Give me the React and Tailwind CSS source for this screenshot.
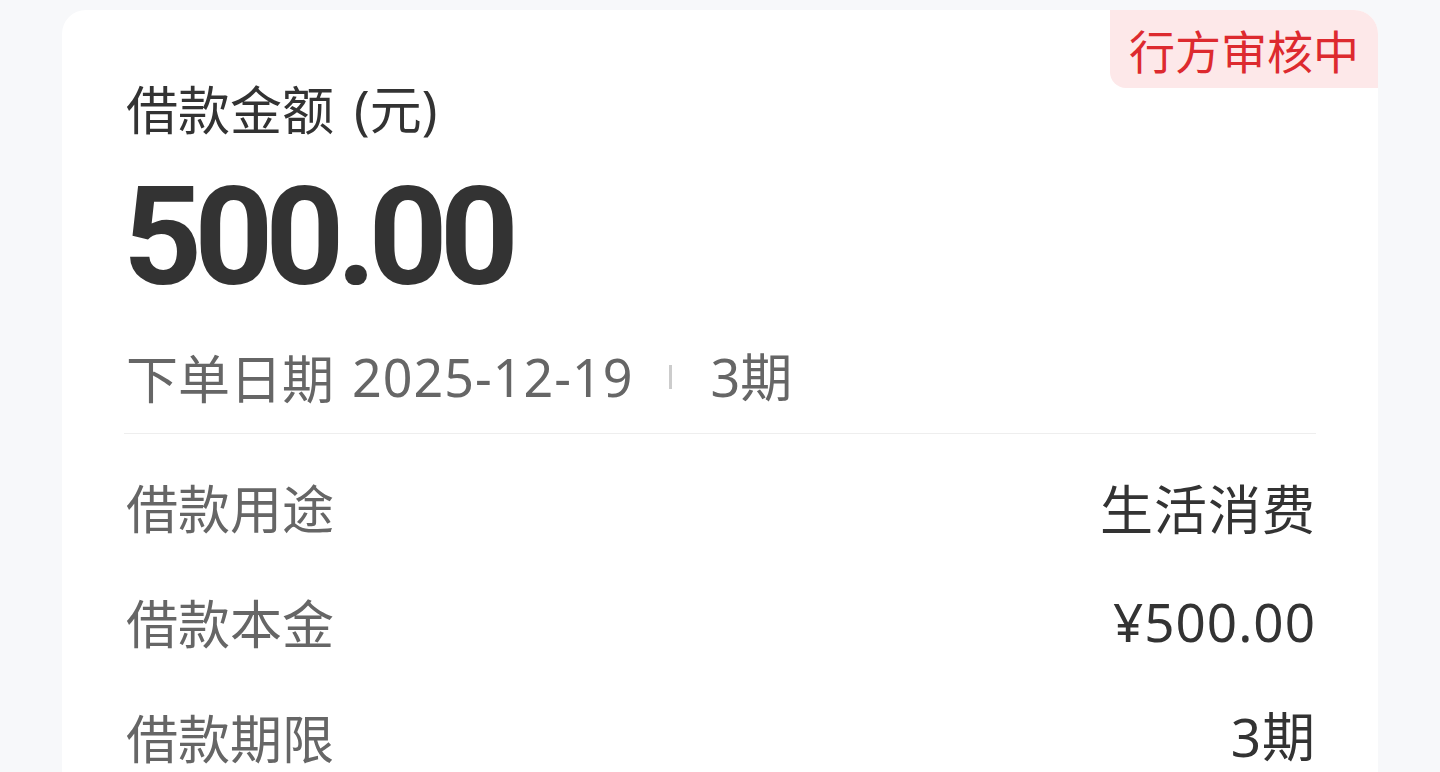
import React from "react";

function Row({ label, value, valueCjk }) {
  return (
    <div className="flex items-center justify-between h-[60px]">
      <span className="text-[52px] leading-[60px] text-[#666666] font-['Noto_Sans_CJK_SC','Noto_Sans',sans-serif]">
        {label}
      </span>
      <span
        className={
          valueCjk
            ? "text-[53px] leading-[60px] text-[#333333] tracking-[1px] font-['Noto_Sans_CJK_SC','Noto_Sans',sans-serif]"
            : "text-[53px] leading-[60px] text-[#333333] tracking-[1px] font-['Noto_Sans','Noto_Sans_CJK_SC',sans-serif]"
        }
      >
        {value}
      </span>
    </div>
  );
}

export default function App() {
  return (
    <div className="min-h-screen bg-[#f7f8fa] pt-[10px] px-[62px] overflow-hidden">
      <div className="relative bg-white rounded-t-[24px] overflow-hidden pl-[64px] pr-[62px] pt-[67px] pb-[40px]">
        <div className="absolute top-0 right-0 w-[268px] h-[78px] bg-[#fde8e9] rounded-bl-[16px] flex items-center justify-center text-[46px] text-[#dd2a2f] font-['Noto_Sans_CJK_SC','Noto_Sans',sans-serif]">
          行方审核中
        </div>
        <div className="flex items-center text-[52px] leading-[60px] text-[#333333] font-['Noto_Sans_CJK_SC','Noto_Sans',sans-serif]">
          <span>借款金额</span>
          <span className="ml-[20px]">
            <span className="font-['Noto_Sans',sans-serif]">(</span>元<span className="font-['Noto_Sans',sans-serif]">)</span>
          </span>
        </div>
        <div className="mt-[29px] -ml-[3px] text-[138px] leading-none font-bold text-[#333333] tracking-[-8px] font-['Roboto',sans-serif]">
          500.00
        </div>
        <div className="mt-[41px] flex items-center h-[60px] text-[52px] leading-[60px] text-[#666666] font-['Noto_Sans','Noto_Sans_CJK_SC',sans-serif]">
          <span className="font-['Noto_Sans_CJK_SC',sans-serif]">下单日期</span>
          <span className="ml-[18px] tracking-[1px]">2025-12-19</span>
          <span className="ml-[36px] mr-[38px] w-[3px] h-[24px] bg-[#cccccc]"></span>
          <span>3期</span>
        </div>
        <div className="mt-[26px] h-px bg-[#eeeeee] -ml-[2px]"></div>
        <div className="pt-[43px] flex flex-col gap-[55px]">
          <Row label="借款用途" value="生活消费" valueCjk />
          <Row label="借款本金" value="¥500.00" />
          <Row label="借款期限" value="3期" />
        </div>
      </div>
    </div>
  );
}
